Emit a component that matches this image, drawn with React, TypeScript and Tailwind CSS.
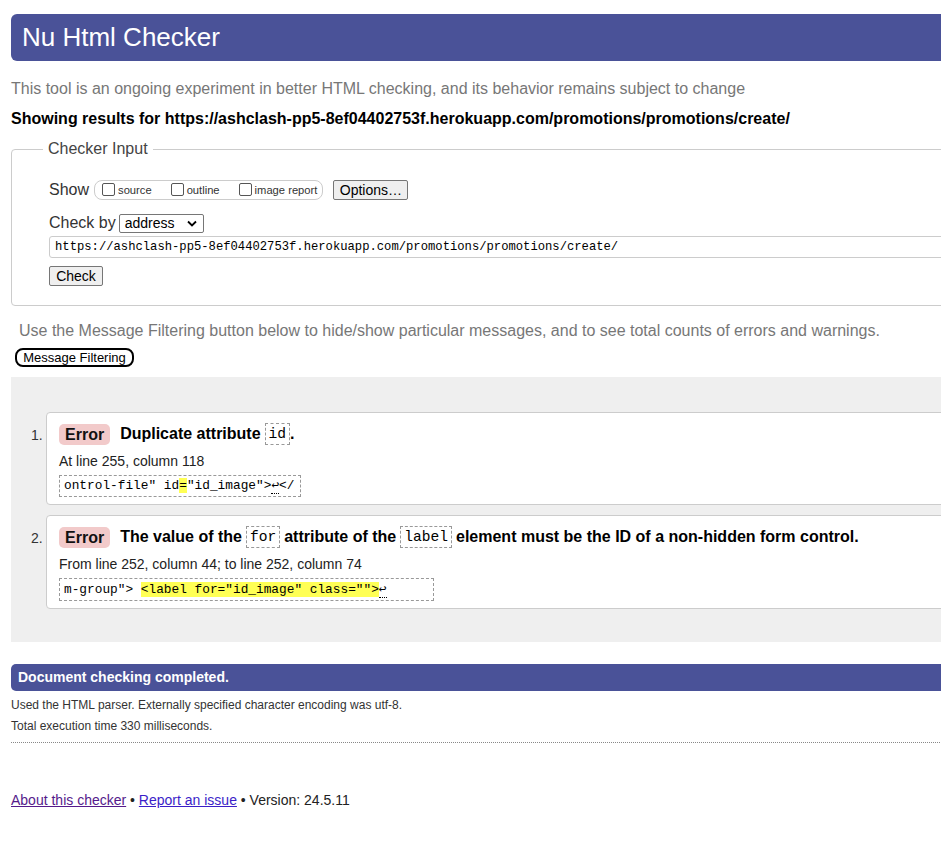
import React from 'react';

const mono = "font-['Liberation_Mono','DejaVu_Sans_Mono',monospace]";

function Code({ children }: { children: React.ReactNode }) {
  return (
    <code
      className={`${mono} inline-block border border-dashed border-[#999] px-[3px] text-[14.6px] leading-[20px] font-normal align-middle`}
    >
      {children}
    </code>
  );
}

function Badge() {
  return (
    <span className="inline-block h-[21px] rounded-[5px] bg-[#f2caca] px-[6px] text-[16px] leading-[21px] font-bold text-[#111]">
      Error
    </span>
  );
}

function Lf() {
  return <span className="border-b border-dotted border-black">↩</span>;
}

function Check({ label, first }: { label: string; first?: boolean }) {
  return (
    <label className={first ? 'flex items-center' : 'ml-[19px] flex items-center'}>
      <span className="block h-[13px] w-[13px] shrink-0 rounded-[2px] border border-[#555] bg-white" />
      <span className="ml-[3px]">{label}</span>
    </label>
  );
}

export default function App() {
  return (
    <div className="w-[941px] h-[844px] overflow-hidden bg-white text-[#222] font-['Liberation_Sans',Arial,sans-serif]">
      <div className="w-[1000px] pl-[11px] pt-[14px]">
        <h1 className="h-[47px] rounded-[6px] bg-[#4a5298] pl-[11px] text-[26px] leading-[47px] text-white">
          Nu Html Checker
        </h1>

        <p className="mt-[18px] text-[16px] leading-[20px] text-[#777]">
          This tool is an ongoing experiment in better HTML checking, and its behavior remains subject to change
        </p>
        <p className="mt-[10px] text-[16px] leading-[20px] font-bold text-black">
          Showing results for https://ashclash-pp5-8ef04402753f.herokuapp.com/promotions/promotions/create/
        </p>

        <fieldset className="mt-[11px] rounded-[4px] border border-[#ccc] pl-[37px] pb-[17px]">
          <legend className="-ml-[6px] px-[5px] text-[16px] leading-[18px] text-[#444]">Checker Input</legend>

          <div className="mt-[22px] flex items-center h-[20px]">
            <span className="text-[16px] text-[#333]">Show</span>
            <div className="ml-[5px] flex h-[20px] items-center rounded-[8px] border border-[#ccc] pl-[7px] pr-[5px] text-[11.2px] text-[#333]">
              <Check label="source" first />
              <Check label="outline" />
              <Check label="image report" />
            </div>
            <button className="ml-[10px] h-[20px] w-[75px] rounded-[2px] border border-[#767676] bg-[#efefef] text-[14px] leading-[18px] text-black">
              Options…
            </button>
          </div>

          <div className="mt-[13px] flex items-center h-[20px]">
            <span className="text-[16px] text-[#333]">Check by</span>
            <div className="ml-[3px] flex h-[19px] w-[85px] items-center justify-between rounded-[2px] border border-[#767676] pl-[5px] pr-[6px] text-[14px] text-black">
              <span>address</span>
              <svg width="10" height="7" viewBox="0 0 10 7">
                <path d="M1 1.5 L5 5.5 L9 1.5" fill="none" stroke="#000" strokeWidth="1.8" />
              </svg>
            </div>
          </div>

          <div
            className={`${mono} mt-[3px] flex h-[22px] items-center rounded-l-[3px] border border-[#ccc] pl-[5px] text-[12.2px] text-black`}
          >
            https://ashclash-pp5-8ef04402753f.herokuapp.com/promotions/promotions/create/
          </div>

          <button className="mt-[8px] h-[20px] w-[54px] rounded-[2px] border border-[#767676] bg-[#efefef] text-[14px] leading-[18px] text-black">
            Check
          </button>
        </fieldset>

        <p className="ml-[8px] mt-[15px] text-[16px] leading-[20px] text-[#777]">
          Use the Message Filtering button below to hide/show particular messages, and to see total counts of errors and warnings.
        </p>
        <button className="ml-[4px] mt-[7px] h-[19px] w-[119px] rounded-[8px] border-2 border-black text-[13px] leading-[15px] text-black">
          Message Filtering
        </button>

        <div className="mt-[8px] bg-[#efefef] pl-[35px] pt-[35px] pb-[33px]">
          <ol className="flex flex-col gap-[10px]">
            <li className="relative rounded-[4px] border border-[#ccc] bg-white pl-[12px] pt-[10px] pb-[7px]">
              <span className="absolute -left-[16px] top-[12px] text-[14px] text-[#333]">1.</span>
              <div className="flex items-center text-[16px] font-bold text-black h-[22px]">
                <Badge />
                <span className="ml-[10px] mr-[4px]">Duplicate attribute</span>
                <Code>id</Code>
                <span>.</span>
              </div>
              <p className="mt-[7px] text-[14px] leading-[18px] text-[#222]">At line 255, column 118</p>
              <div
                className={`${mono} mt-[5px] inline-block h-[22px] border border-dashed border-[#999] pl-[4px] pr-[6px] text-[12.8px] leading-[20px] text-black`}
              >
                ontrol-file" id<span className="bg-[#ffff55]">=</span>"id_image"&gt;<Lf />&lt;/
              </div>
            </li>

            <li className="relative rounded-[4px] border border-[#ccc] bg-white pl-[12px] pt-[10px] pb-[7px]">
              <span className="absolute -left-[16px] top-[12px] text-[14px] text-[#333]">2.</span>
              <div className="flex items-center text-[16px] font-bold text-black h-[22px]">
                <Badge />
                <span className="ml-[10px] mr-[4px]">The value of the</span>
                <Code>for</Code>
                <span className="mx-[4px]">attribute of the</span>
                <Code>label</Code>
                <span className="ml-[4px]">element must be the ID of a non-hidden form control.</span>
              </div>
              <p className="mt-[7px] text-[14px] leading-[18px] text-[#222]">
                From line 252, column 44; to line 252, column 74
              </p>
              <div
                className={`${mono} mt-[5px] inline-block h-[23px] w-[375px] border border-dashed border-[#999] pl-[4px] text-[12.8px] leading-[21px] text-black whitespace-pre`}
              >
                m-group"&gt; <span className="bg-[#ffff55]">&lt;label for="id_image" class=""&gt;</span>
                <Lf />
              </div>
            </li>
          </ol>
        </div>

        <div className="mt-[22px] h-[27px] rounded-l-[5px] bg-[#4a5298] pl-[7px] text-[14px] leading-[27px] font-bold text-white">
          Document checking completed.
        </div>
        <p className="mt-[6px] text-[12px] leading-[16px] text-[#333]">
          Used the HTML parser. Externally specified character encoding was utf-8.
        </p>
        <p className="mt-[5px] text-[12px] leading-[16px] text-[#333]">Total execution time 330 milliseconds.</p>
        <div className="mt-[8px] border-t border-dotted border-[#888]" />

        <p className="mt-[48px] text-[14px] leading-[18px] text-[#222]">
          <a href="#" className="text-[#551a8b] underline">About this checker</a> •{' '}
          <a href="#" className="text-[#3b1ec8] underline">Report an issue</a> • Version: 24.5.11
        </p>
      </div>
    </div>
  );
}
